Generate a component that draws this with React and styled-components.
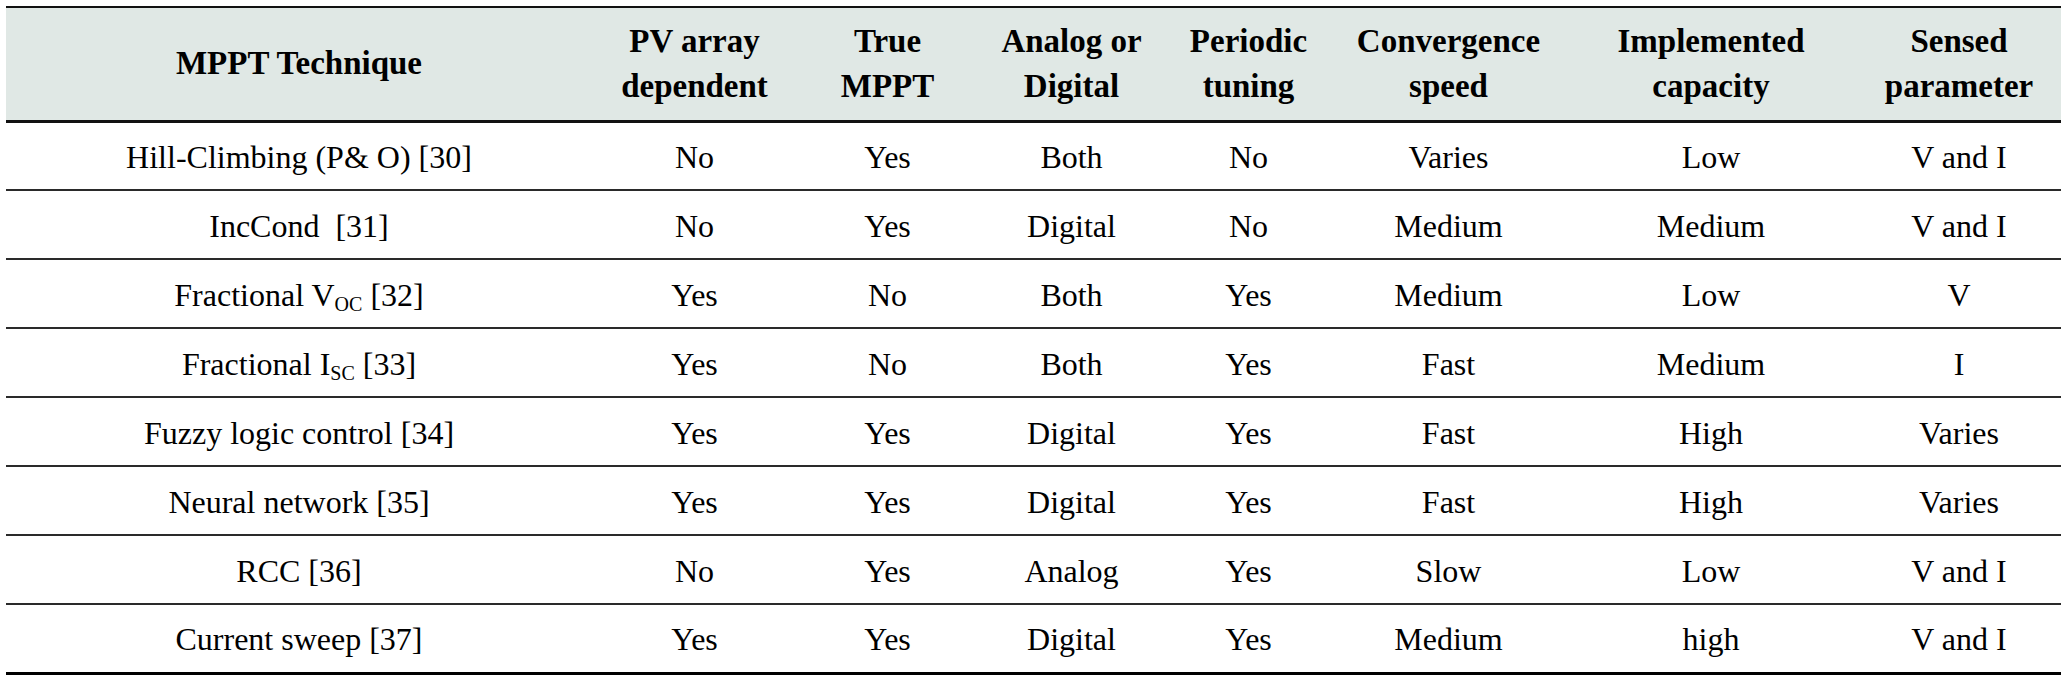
import React from "react";
import styled, { createGlobalStyle } from "styled-components";

const Global = createGlobalStyle`
  html, body { margin: 0; padding: 0; background: #ffffff; }
  body { font-family: "Liberation Serif", "Times New Roman", serif; color: #000; }
`;

const Page = styled.div`
  padding: 6px 7px 0 6px;
  width: 2055px;
`;

const Table = styled.table`
  width: 2055px;
  table-layout: fixed;
  border-collapse: collapse;
  font-family: "Liberation Serif", "Times New Roman", serif;
  font-size: 32px;
  color: #000;
`;

const HeadRow = styled.tr`
  background: #e0e8e5;
  border-top: 2px solid #111;
  border-bottom: 3px solid #111;
  height: 114px;
`;

const HeadCell = styled.th`
  font-weight: 700;
  font-size: 33px;
  line-height: 45px;
  text-align: center;
  vertical-align: middle;
  padding: 0;
`;

const Row = styled.tr`
  height: 69px;
  border-bottom: ${(p) => (p.$last ? "3px solid #000" : "2px solid #2a2a2a")};
`;

const Cell = styled.td`
  text-align: center;
  vertical-align: middle;
  padding: 2px 0 0;
  white-space: pre;
  line-height: 36px;
  font-weight: 400;
`;

const Sub = styled.sub`
  font-size: 20px;
  vertical-align: -5px;
  line-height: 0;
`;

const widths = [586, 205, 181, 187, 167, 233, 292, 204];

const headers = [
  ["MPPT Technique"],
  ["PV array", "dependent"],
  ["True", "MPPT"],
  ["Analog or", "Digital"],
  ["Periodic", "tuning"],
  ["Convergence", "speed"],
  ["Implemented", "capacity"],
  ["Sensed", "parameter"],
];

const rows = [
  ["Hill-Climbing (P& O) [30]", "No", "Yes", "Both", "No", "Varies", "Low", "V and I"],
  ["IncCond  [31]", "No", "Yes", "Digital", "No", "Medium", "Medium", "V and I"],
  [
    <>
      Fractional V<Sub>OC</Sub> [32]
    </>,
    "Yes", "No", "Both", "Yes", "Medium", "Low", "V",
  ],
  [
    <>
      Fractional I<Sub>SC</Sub> [33]
    </>,
    "Yes", "No", "Both", "Yes", "Fast", "Medium", "I",
  ],
  ["Fuzzy logic control [34]", "Yes", "Yes", "Digital", "Yes", "Fast", "High", "Varies"],
  ["Neural network [35]", "Yes", "Yes", "Digital", "Yes", "Fast", "High", "Varies"],
  ["RCC [36]", "No", "Yes", "Analog", "Yes", "Slow", "Low", "V and I"],
  ["Current sweep [37]", "Yes", "Yes", "Digital", "Yes", "Medium", "high", "V and I"],
];

export default function App() {
  return (
    <>
      <Global />
      <Page>
        <Table>
          <colgroup>
            {widths.map((w, i) => (
              <col key={i} style={{ width: w }} />
            ))}
          </colgroup>
          <thead>
            <HeadRow>
              {headers.map((h, i) => (
                <HeadCell key={i}>
                  {h.map((line, j) => (
                    <React.Fragment key={j}>
                      {j > 0 && <br />}
                      {line}
                    </React.Fragment>
                  ))}
                </HeadCell>
              ))}
            </HeadRow>
          </thead>
          <tbody>
            {rows.map((r, i) => (
              <Row key={i} $last={i === rows.length - 1}>
                {r.map((c, j) => (
                  <Cell key={j}>{c}</Cell>
                ))}
              </Row>
            ))}
          </tbody>
        </Table>
      </Page>
    </>
  );
}
